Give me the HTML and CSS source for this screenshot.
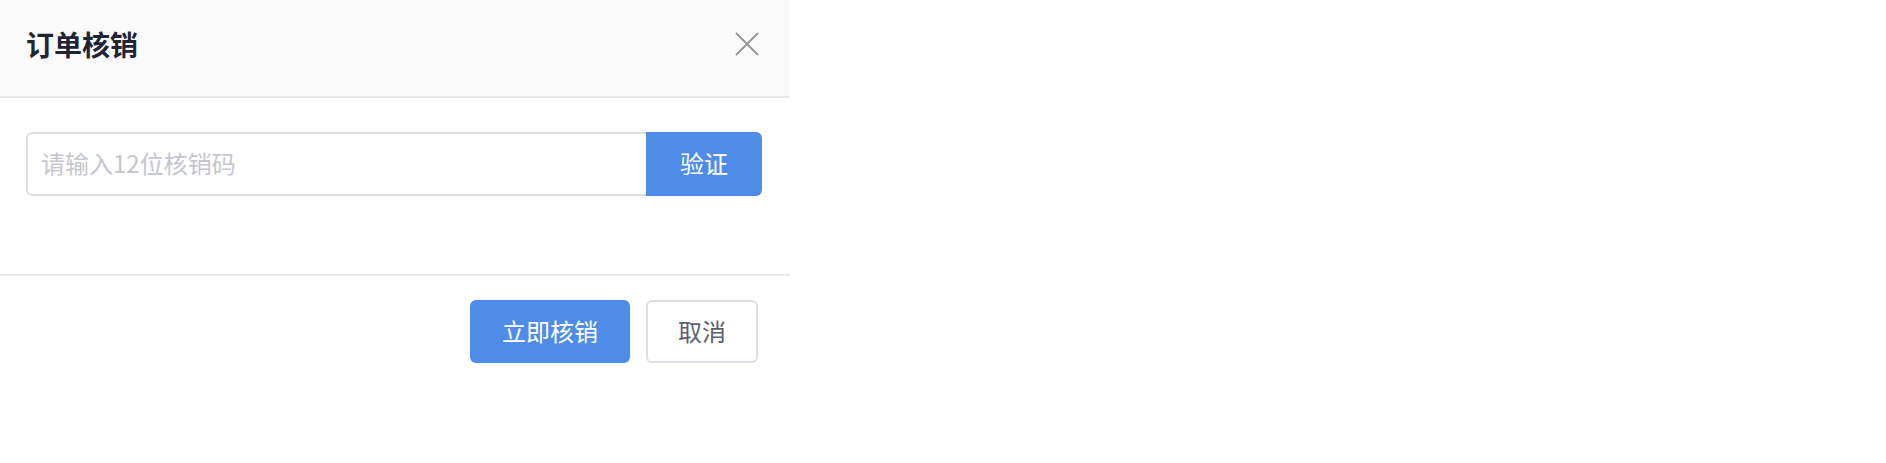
FILE: index.html
```html
<!DOCTYPE html>
<html lang="zh-CN">
<head>
  <meta charset="UTF-8" />
  <meta name="viewport" content="width=device-width, initial-scale=1" />
  <title>订单核销</title>
  <link rel="stylesheet" href="styles.css">
</head>
<body>
  <div id="dialog">
    <div class="dialog-header">
      <span class="dialog-title">订单核销</span>
      <button class="close-btn" type="button" aria-label="关闭">
        <svg width="24" height="24" viewBox="0 0 24 24">
          <path d="M1 1 L23 23 M23 1 L1 23" stroke="#999" stroke-width="2" fill="none" />
        </svg>
      </button>
    </div>

    <div class="dialog-body">
      <div class="input-group">
        <input type="text" class="code-input" placeholder="请输入12位核销码" maxlength="12" />
        <button class="btn-verify" type="button">验证</button>
      </div>
    </div>

    <div class="dialog-footer">
      <button class="btn btn-primary" type="button">立即核销</button>
      <button class="btn btn-default" type="button">取消</button>
    </div>
  </div>
</body>
</html>
```

FILE: styles.css
```css
body {
  margin: 0;
  background: #fff;
  font-family: "Noto Sans CJK SC", sans-serif;
}

#dialog {
  width: 790px;
  background: #fff;
}

.dialog-header {
  display: flex;
  justify-content: space-between;
  align-items: center;
  background: #fafafa;
  padding: 30px 31px 38px 26px;
  border-bottom: 2px solid #e8e8ec;
}

.dialog-title {
  font-size: 28px;
  line-height: 28px;
  font-weight: 600;
  color: #1f2535;
}

.close-btn {
  display: flex;
  padding: 0;
  border: none;
  background: none;
  cursor: pointer;
}

.dialog-body {
  padding: 34px 28px 78px 26px;
}

.input-group {
  display: flex;
  height: 64px;
}

.code-input {
  flex: 1;
  min-width: 0;
  box-sizing: border-box;
  height: 64px;
  margin: 0;
  padding: 0 13px 3px;
  border: 2px solid #dcdfe6;
  border-right: none;
  border-radius: 6px 0 0 6px;
  font-family: inherit;
  font-size: 24px;
  color: #606266;
  outline: none;
}

.code-input::placeholder {
  color: #c4c6cd;
}

.btn-verify {
  width: 116px;
  height: 64px;
  padding: 0 0 3px;
  border: none;
  border-radius: 0 6px 6px 0;
  background: #4e8ce8;
  color: #fff;
  font-family: inherit;
  font-size: 24px;
  cursor: pointer;
}

.dialog-footer {
  display: flex;
  justify-content: flex-end;
  gap: 16px;
  padding: 24px 32px;
  border-top: 2px solid #e8e8ec;
}

.btn {
  box-sizing: border-box;
  height: 63px;
  padding: 0 0 2px;
  border-radius: 6px;
  font-family: inherit;
  font-size: 24px;
  cursor: pointer;
}

.btn-primary {
  width: 160px;
  border: none;
  background: #4e8ce8;
  color: #fff;
}

.btn-default {
  width: 112px;
  border: 2px solid #dcdfe6;
  background: #fff;
  color: #5c6170;
}
```
